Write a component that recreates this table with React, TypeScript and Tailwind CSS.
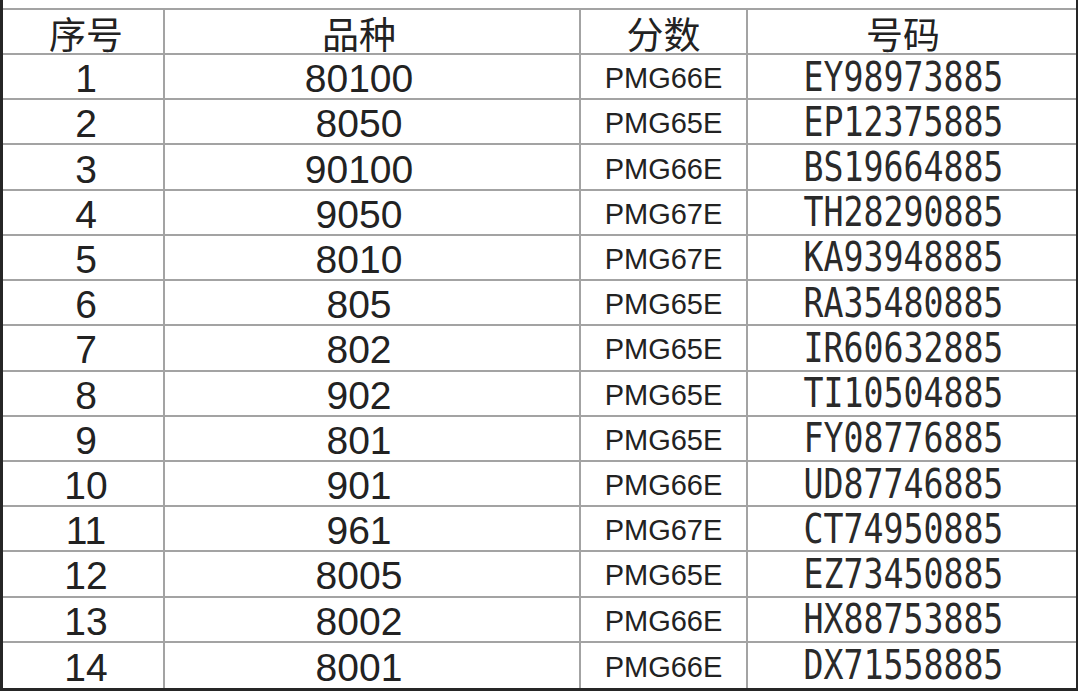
const ROWS: [string, string, string][] = [
  ['80100', 'PMG66E', 'EY98973885'],
  ['8050', 'PMG65E', 'EP12375885'],
  ['90100', 'PMG66E', 'BS19664885'],
  ['9050', 'PMG67E', 'TH28290885'],
  ['8010', 'PMG67E', 'KA93948885'],
  ['805', 'PMG65E', 'RA35480885'],
  ['802', 'PMG65E', 'IR60632885'],
  ['902', 'PMG65E', 'TI10504885'],
  ['801', 'PMG65E', 'FY08776885'],
  ['901', 'PMG66E', 'UD87746885'],
  ['961', 'PMG67E', 'CT74950885'],
  ['8005', 'PMG65E', 'EZ73450885'],
  ['8002', 'PMG66E', 'HX88753885'],
  ['8001', 'PMG66E', 'DX71558885'],
];

const HEADERS = ['序号', '品种', '分数', '号码'];
const HEADER_PAD = ['pl-[6px]', 'pr-[26px]', '', 'pr-[18px]'];

const cjk = { fontFamily: '"Noto Sans CJK SC", "Noto Sans", sans-serif' };
const sans = { fontFamily: '"Liberation Sans", Arial, sans-serif' };
const mono = { fontFamily: '"DejaVu Sans Mono", "Liberation Mono", monospace' };

export default function App() {
  return (
    <div className="w-[1080px] h-[691px] bg-white">
      <div className="w-[1078px] h-[691px] flex flex-col pt-[8px] border-l-[3px] border-r-[2px] border-b-[3px] border-[#262626] text-[#222]">
        <div className="flex-1 min-h-0 grid grid-cols-[162px_416px_167px_1fr] grid-rows-[45px_repeat(14,minmax(0,1fr))] border-t-2 border-[#a3a3a3]">
          {/* Header */}
          {HEADERS.map((h, i) => (
            <div
              key={h}
              className={`flex items-center justify-center border-b-2 border-[#a3a3a3] pt-[4px] text-[37px] leading-none ${
                i < 3 ? 'border-r-2' : ''
              } ${HEADER_PAD[i]}`}
              style={cjk}
            >
              {h}
            </div>
          ))}

          {/* Rows */}
          {ROWS.map(([kind, score, code], idx) => {
            const last = idx === ROWS.length - 1;
            const rowBorder = last ? '' : 'border-b-2';
            return [
              <div
                key={`n${idx}`}
                className={`flex items-center justify-center border-r-2 border-[#a3a3a3] ${rowBorder} pt-[4px] pl-[6px] text-[39px] leading-none`}
                style={sans}
              >
                {idx + 1}
              </div>,
              <div
                key={`k${idx}`}
                className={`flex items-center justify-center border-r-2 border-[#a3a3a3] ${rowBorder} pt-[4px] pr-[26px] text-[39px] leading-none`}
                style={sans}
              >
                {kind}
              </div>,
              <div
                key={`s${idx}`}
                className={`flex items-center justify-center border-r-2 border-[#a3a3a3] ${rowBorder} pt-[4px] text-[29px] leading-none`}
                style={sans}
              >
                {score}
              </div>,
              <div
                key={`c${idx}`}
                className={`flex items-center justify-center border-[#a3a3a3] ${rowBorder} pr-[18px] text-[40px] leading-none text-[#2a2a2a]`}
                style={mono}
              >
                <span className="inline-block scale-x-[0.83]">{code}</span>
              </div>,
            ];
          })}
        </div>
      </div>
    </div>
  );
}
